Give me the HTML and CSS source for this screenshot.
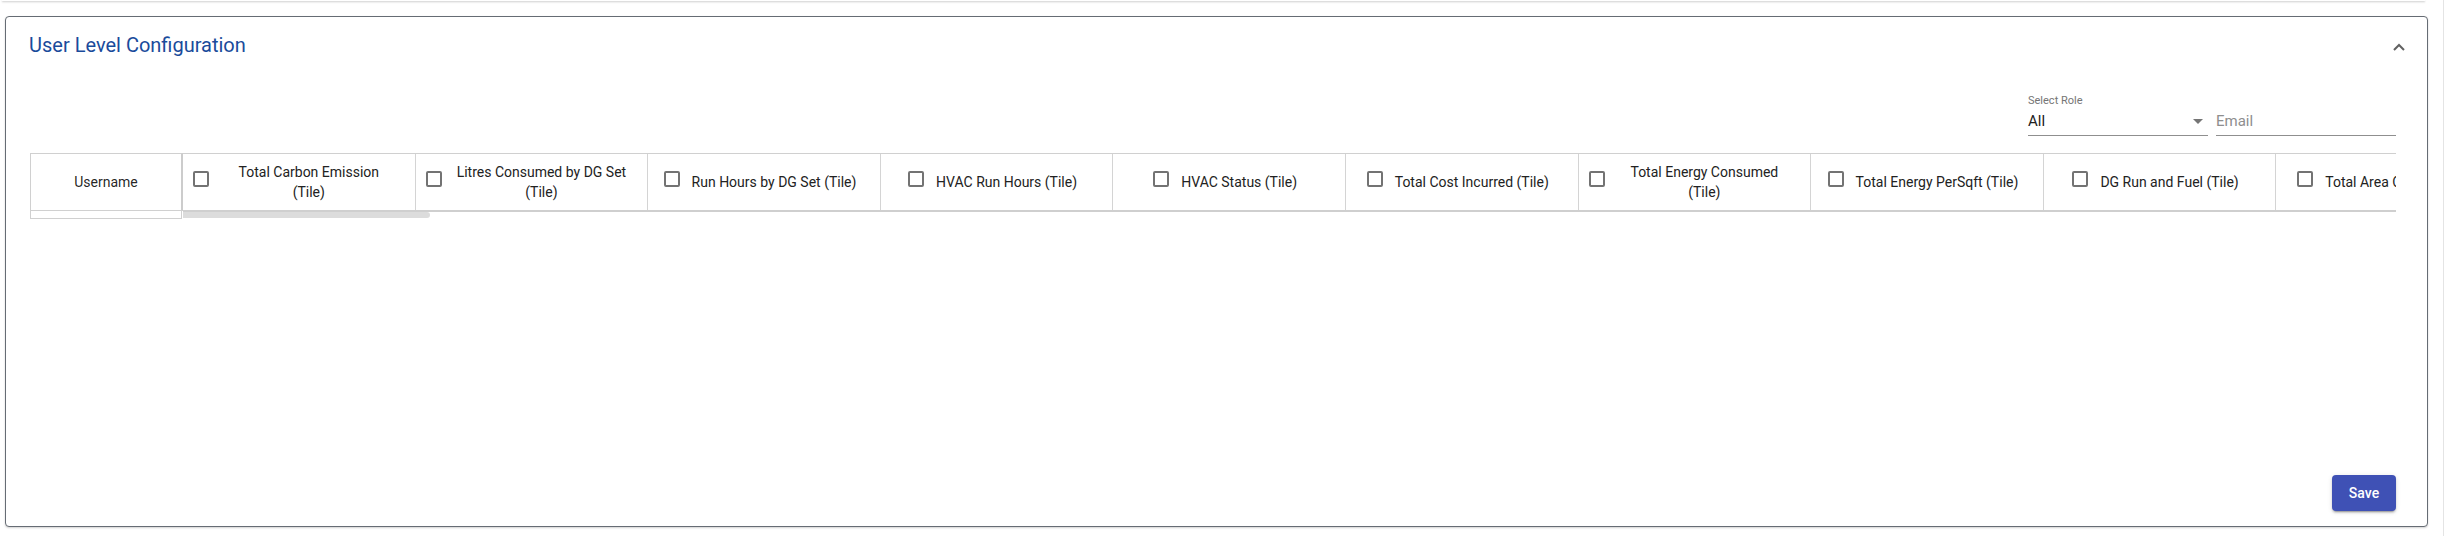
FILE: index.html
```html
<!DOCTYPE html>
<html lang="en">
<head>
<meta charset="utf-8">
<title>User Level Configuration</title>
<link rel="stylesheet" href="styles.css">
</head>
<body>
<div class="page">
  <div class="main">
    <div class="prev-card"></div>
    <section class="card">
      <header class="panel-header">
        <h2 class="panel-title">User Level Configuration</h2>
        <svg class="chevron" width="12" height="8" viewBox="0 0 12 8"><polyline points="1,7 6,2 11,7" fill="none" stroke="#616161" stroke-width="2"/></svg>
      </header>
      <div class="panel-body">
        <div class="filters">
          <div class="field">
            <label class="field-label">Select Role</label>
            <div class="field-input select-input">
              <span class="field-value">All</span>
              <svg class="caret" width="10" height="5" viewBox="0 0 10 5"><polygon points="0,0 10,0 5,5" fill="#757575"/></svg>
            </div>
          </div>
          <div class="field">
            <label class="field-label">&nbsp;</label>
            <div class="field-input">
              <span class="placeholder">Email</span>
            </div>
          </div>
        </div>
        <div class="grid">
          <div class="sticky-col">
            <div class="user-head">Username</div>
            <div class="user-foot"></div>
          </div>
          <div class="scroll-area">
            <div class="head-row">
              <div class="col"><div class="col-inner"><span class="cb"></span><span class="col-label">Total Carbon Emission (Tile)</span></div></div>
              <div class="col"><div class="col-inner"><span class="cb"></span><span class="col-label">Litres Consumed by DG Set (Tile)</span></div></div>
              <div class="col"><div class="col-inner"><span class="cb"></span><span class="col-label">Run Hours by DG Set (Tile)</span></div></div>
              <div class="col"><div class="col-inner"><span class="cb"></span><span class="col-label">HVAC Run Hours (Tile)</span></div></div>
              <div class="col"><div class="col-inner"><span class="cb"></span><span class="col-label">HVAC Status (Tile)</span></div></div>
              <div class="col"><div class="col-inner"><span class="cb"></span><span class="col-label">Total Cost Incurred (Tile)</span></div></div>
              <div class="col"><div class="col-inner"><span class="cb"></span><span class="col-label">Total Energy Consumed (Tile)</span></div></div>
              <div class="col"><div class="col-inner"><span class="cb"></span><span class="col-label">Total Energy PerSqft (Tile)</span></div></div>
              <div class="col"><div class="col-inner"><span class="cb"></span><span class="col-label">DG Run and Fuel (Tile)</span></div></div>
              <div class="col"><div class="col-inner"><span class="cb"></span><span class="col-label">Total Area Covered (Tile)</span></div></div>
            </div>
            <div class="hscroll"><div class="thumb"></div></div>
          </div>
        </div>
      </div>
      <div class="actions">
        <button class="save-btn" type="button">Save</button>
      </div>
    </section>
  </div>
  <div class="page-edge"></div>
</div>
</body>
</html>
```

FILE: styles.css
```css
html, body {
  margin: 0;
  padding: 0;
  background: #ffffff;
}

body {
  font-family: Roboto, "Liberation Sans", Arial, sans-serif;
  color: rgba(0, 0, 0, 0.87);
  overflow: hidden;
}

.page {
  display: flex;
  height: 536px;
}

.main {
  flex: 1;
  min-width: 0;
}

.page-edge {
  width: 8px;
  flex: none;
  border-left: 1px solid #e4e4e4;
  background: #ffffff;
}

.prev-card {
  height: 1px;
  margin: 0 18px 0 2px;
  background: #ffffff;
  box-shadow: 0 1px 2px rgba(0, 0, 0, 0.28);
}

.card {
  margin: 15px 15px 0 5px;
  height: 511px;
  box-sizing: border-box;
  border: 1px solid #666c74;
  border-radius: 4px;
  background: #ffffff;
  box-shadow: 0 1px 2px rgba(0, 0, 0, 0.18);
  display: flex;
  flex-direction: column;
}

.panel-header {
  height: 56px;
  flex: none;
  display: flex;
  align-items: center;
  justify-content: space-between;
  padding: 0 22px 0 23px;
}

.panel-title {
  margin: 0;
  font-size: 20px;
  font-weight: 400;
  color: #1a4b9b;
}

.chevron {
  display: block;
  margin-top: 3px;
}

.panel-body {
  flex: 1;
  padding: 0 31px 0 24px;
  min-height: 0;
}

.filters {
  display: flex;
  justify-content: flex-end;
  gap: 8px;
  padding-top: 21px;
  margin-bottom: 17px;
}

.field {
  width: 180px;
  display: flex;
  flex-direction: column;
}

.field-label {
  font-size: 11px;
  line-height: 13px;
  color: #757575;
  height: 13px;
}

.field-input {
  margin-top: 5px;
  height: 18px;
  padding-bottom: 5px;
  border-bottom: 1px solid #8f8f8f;
  display: flex;
  align-items: center;
  font-size: 15px;
  line-height: 18px;
}

.select-input {
  justify-content: space-between;
}

.field-value {
  color: #212121;
}

.placeholder {
  color: #8e8e8e;
}

.caret {
  display: block;
  margin-right: 5px;
}

.grid {
  display: flex;
  font-size: 14px;
  line-height: 20px;
}

.sticky-col {
  flex: none;
  width: 153px;
}

.user-head {
  height: 56px;
  border: 1px solid #d0d0d0;
  border-right: 2px solid #cccccc;
  display: flex;
  align-items: center;
  justify-content: center;
  padding-bottom: 1px;
  box-sizing: content-box;
  height: 55px;
}

.user-foot {
  width: 150px;
  height: 7px;
  border: 1px solid #d0d0d0;
  border-top: none;
}

.scroll-area {
  flex: 1;
  min-width: 0;
  overflow: hidden;
}

.head-row {
  display: flex;
  height: 56px;
  border-top: 1px solid #d0d0d0;
  border-bottom: 2px solid #cfcfcf;
}

.col {
  flex: none;
  width: 232.6px;
  box-sizing: border-box;
  border-right: 1px solid #d4d4d4;
  padding: 0 10px;
  display: flex;
  align-items: center;
  justify-content: center;
}

.col-inner {
  display: flex;
  align-items: center;
  min-width: 0;
}

.cb {
  flex: none;
  width: 16px;
  height: 16px;
  box-sizing: border-box;
  border: 2px solid #737373;
  border-radius: 2px;
  margin: 0 12px 7px 0;
}

.col-label {
  flex: 0 1 auto;
  padding-right: 8px;
  text-align: center;
  color: #222222;
}

.hscroll {
  height: 6px;
}

.thumb {
  width: 247px;
  height: 6px;
  background: #dcdcdc;
  border-radius: 0 4px 4px 0;
}

.actions {
  flex: none;
  display: flex;
  justify-content: flex-end;
  padding: 0 31px 15px 0;
}

.save-btn {
  width: 64px;
  height: 36px;
  border: none;
  border-radius: 4px;
  background: #3f51b5;
  color: #ffffff;
  font-family: Roboto, "Liberation Sans", Arial, sans-serif;
  font-size: 14px;
  font-weight: 500;
  box-shadow: 0 3px 1px -2px rgba(0, 0, 0, 0.2), 0 2px 2px 0 rgba(0, 0, 0, 0.14), 0 1px 5px 0 rgba(0, 0, 0, 0.12);
  cursor: pointer;
}
```
